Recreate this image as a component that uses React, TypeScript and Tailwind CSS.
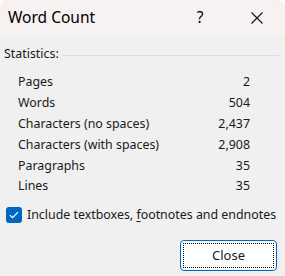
import React from 'react';

const rows: [string, string][] = [
  ['Pages', '2'],
  ['Words', '504'],
  ['Characters (no spaces)', '2,437'],
  ['Characters (with spaces)', '2,908'],
  ['Paragraphs', '35'],
  ['Lines', '35'],
];

const App: React.FC = () => {
  return (
    <div
      className="w-[285px] h-[276px] bg-[#f0f0f0] text-[#1a1a1a] text-[12.4px] overflow-hidden rounded-t-[8px] flex flex-col"
      style={{ fontFamily: '"Segoe UI", "Noto Sans", sans-serif' }}
    >
      {/* Title bar */}
      <div className="h-[36px] bg-[#f7f1f1] flex items-center shrink-0">
        <span className="pl-[8px] text-[15.5px] text-black flex-1">Word Count</span>
        <span className="w-[20px] mr-[37px] text-center text-[15.5px] text-black">?</span>
        <span className="w-[20px] mr-[18px] flex items-center justify-center">
          <svg width="12" height="12" viewBox="0 0 12 12" stroke="#111" strokeWidth="1.1">
            <path d="M0.5 0.5 L11.5 11.5 M11.5 0.5 L0.5 11.5" />
          </svg>
        </span>
      </div>

      {/* Statistics */}
      <div className="flex items-center pl-[4px] pr-[6px] mt-[9px]">
        <span>Statistics:</span>
        <div className="flex-1 ml-[4px] h-px bg-[#dcdcdc] mt-[2px]" />
      </div>

      <div className="flex flex-col pl-[18px] pr-[35px] mt-[10px] gap-[2.8px]">
        {rows.map(([label, value]) => (
          <div key={label} className="flex justify-between h-[18px] items-center">
            <span>{label}</span>
            <span>{value}</span>
          </div>
        ))}
      </div>

      {/* Checkbox */}
      <div className="flex items-center pl-[6px] mt-[10px] gap-[5px]">
        <div className="w-[16px] h-[16px] rounded-[3px] bg-[#0067c0] flex items-center justify-center">
          <svg width="10" height="8" viewBox="0 0 10 8" fill="none" stroke="white" strokeWidth="1.2">
            <path d="M1 4.2 L3.6 6.6 L9 1.2" />
          </svg>
        </div>
        <span>
          Include textboxes, <span className="underline underline-offset-2">f</span>ootnotes and endnotes
        </span>
      </div>

      {/* Close button */}
      <div className="flex justify-end pr-[8px] mt-[16px]">
        <button className="w-[97px] h-[31px] bg-white border border-[#0067c0] rounded-[4px] p-[2px]">
          <div className="w-full h-full border border-dotted border-black flex items-center justify-center text-[13px]">
            Close
          </div>
        </button>
      </div>
    </div>
  );
};

export default App;
